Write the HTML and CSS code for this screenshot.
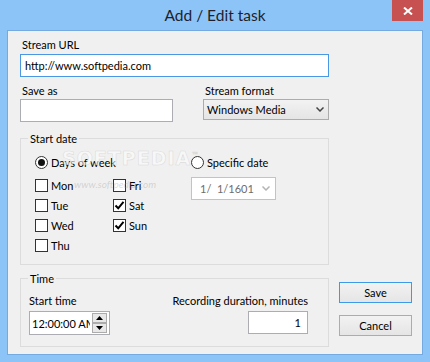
FILE: index.html
```html
<!DOCTYPE html>
<html lang="en">
<head>
    <meta charset="UTF-8">
    <title>Add / Edit task</title>
    <link rel="stylesheet" href="styles.css">
</head>
<body>

    <div class="window">
        <div class="titlebar">
            <div class="title">Add / Edit task</div>
            <button class="close" aria-label="Close">
                <svg width="10" height="8" viewBox="0 0 10 8"><path d="M1 0.5 L9 7.5 M9 0.5 L1 7.5" stroke="#fff" stroke-width="2"/></svg>
            </button>
        </div>

        <div class="client">
            <div class="main">
                <label class="label">Stream URL</label>
                <input type="text" class="textbox url" value="http://www.softpedia.com">

                <div class="format-row">
                    <div class="field">
                        <label class="label">Save as</label>
                        <input type="text" class="textbox saveas" value="">
                    </div>
                    <div class="field">
                        <label class="label">Stream format</label>
                        <div class="combo">
                            <span>Windows Media</span>
                            <svg width="8" height="5" viewBox="0 0 8 5"><path d="M0.5 0.5 L4 4 L7.5 0.5" fill="none" stroke="#444" stroke-width="1.5"/></svg>
                        </div>
                    </div>
                </div>

                <fieldset class="group start-date">
                    <legend>Start date</legend>
                    <div class="date-grid">
                        <label class="radio days"><span class="dot checked"></span>Days of week</label>
                        <label class="radio"><span class="dot"></span>Specific date</label>
                        <label class="check"><span class="box"></span>Mon</label>
                        <label class="check"><span class="box"></span>Fri</label>
                        <div class="datepick">
                            <span class="date-text">1/  1/1601</span>
                            <svg width="8" height="5" viewBox="0 0 8 5"><path d="M0.5 0.5 L4 4 L7.5 0.5" fill="none" stroke="#b4b4b4" stroke-width="1.5"/></svg>
                        </div>
                        <label class="check"><span class="box"></span>Tue</label>
                        <label class="check"><span class="box"><svg width="11" height="11" viewBox="0 0 11 11"><path d="M1.5 5.5 L4.2 8.3 L9.5 1.8" fill="none" stroke="#000" stroke-width="2"/></svg></span>Sat</label>
                        <label class="check"><span class="box"></span>Wed</label>
                        <label class="check"><span class="box"><svg width="11" height="11" viewBox="0 0 11 11"><path d="M1.5 5.5 L4.2 8.3 L9.5 1.8" fill="none" stroke="#000" stroke-width="2"/></svg></span>Sun</label>
                        <label class="check"><span class="box"></span>Thu</label>
                    </div>
                </fieldset>

                <fieldset class="group time">
                    <legend>Time</legend>
                    <div class="time-row">
                        <div class="field">
                            <label class="label plain">Start time</label>
                            <div class="spin">
                                <span class="spin-text">12:00:00 AM</span>
                                <div class="spin-buttons">
                                    <span class="spin-btn"><svg width="7" height="4" viewBox="0 0 7 4"><path d="M0 4 L3.5 0 L7 4 Z" fill="#000"/></svg></span>
                                    <span class="spin-btn"><svg width="7" height="4" viewBox="0 0 7 4"><path d="M0 0 L7 0 L3.5 4 Z" fill="#000"/></svg></span>
                                </div>
                            </div>
                        </div>
                        <div class="field right">
                            <label class="label plain">Recording duration, minutes</label>
                            <input type="text" class="textbox minutes" value="1">
                        </div>
                    </div>
                </fieldset>
            </div>

            <div class="side">
                <button class="btn default">Save</button>
                <button class="btn">Cancel</button>
            </div>

            <!-- softpedia watermark -->
            <div class="watermark">
                <span class="wm-big">SOFTPEDIA<sup>™</sup></span>
                <span class="wm-small">www.softpedia.com</span>
            </div>
        </div>
    </div>

</body>
</html>
```

FILE: styles.css
```css
/* Reset */
* {
    margin: 0;
    padding: 0;
    box-sizing: border-box;
}

body {
    width: 430px;
    height: 362px;
    font-family: Lato, sans-serif;
    font-size: 11px;
    color: #000;
    background: #8dc4f7;
    overflow: hidden;
}

/* Window frame */
.window {
    height: 362px;
    display: flex;
    flex-direction: column;
    padding: 0 7px 7px;
    background: #8dc4f7;
}

.titlebar {
    height: 30px;
    display: flex;
    align-items: flex-start;
}

.title {
    flex: 1;
    padding-left: 31px;
    text-align: center;
    font-size: 15.5px;
    line-height: 30px;
    color: #1e1e2c;
}

.close {
    width: 31px;
    height: 21px;
    border: none;
    background: #c75050;
    display: flex;
    align-items: center;
    justify-content: center;
}

/* Client area */
.client {
    flex: 1;
    position: relative;
    display: flex;
    gap: 10px;
    padding: 6px 10px 0 12px;
    background: #f0f0f0;
    border: 1px solid #74aae0;
}

.main {
    width: 309px;
    display: flex;
    flex-direction: column;
}

.side {
    width: 73px;
    display: flex;
    flex-direction: column;
    justify-content: flex-end;
    gap: 12px;
    padding-bottom: 18px;
}

.label {
    display: block;
    line-height: 15px;
    padding-left: 2px;
    white-space: nowrap;
}

.label.plain {
    padding-left: 0;
}

/* Text boxes */
.textbox {
    display: block;
    height: 23px;
    padding: 0 4px;
    font-family: Lato, sans-serif;
    font-size: 11px;
    color: #000;
    background: #fff;
    border: 1px solid #abadb3;
    outline: none;
}

.url {
    width: 309px;
    margin-top: 2px;
    border-color: #4a98e4;
}

.format-row {
    display: grid;
    grid-template-columns: 153px 126px;
    column-gap: 30px;
    margin-top: 6px;
}

.saveas {
    width: 153px;
    margin-top: 1px;
}

.combo {
    height: 21px;
    margin-top: 1px;
    padding: 0 4px 0 3px;
    display: flex;
    align-items: center;
    justify-content: space-between;
    background: linear-gradient(#f2f2f2, #e5e5e5);
    border: 1px solid #acacac;
}

/* Group boxes */
.group {
    border: 1px solid #dcdcdc;
    min-width: 0;
}

.group legend {
    line-height: 15px;
    padding: 0 2px;
    margin-left: -1px;
}

.start-date {
    margin-top: 9px;
    padding: 8px 0 9px 8px;
}

.time {
    margin-top: 6px;
    padding: 7px 20px 11px 8px;
}

.date-grid {
    display: grid;
    grid-template-columns: 78px 78px 1fr;
    grid-template-rows: 21px repeat(4, 20px);
    margin-left: 6px;
}

.radio {
    height: 16px;
    align-self: start;
    display: flex;
    align-items: center;
    gap: 3px;
}

.radio.days {
    grid-column: 1 / span 2;
}

.dot {
    width: 13px;
    height: 13px;
    border: 1px solid #333;
    border-radius: 50%;
    background: #fff;
    display: flex;
    align-items: center;
    justify-content: center;
}

.dot.checked::after {
    content: "";
    width: 7px;
    height: 7px;
    border-radius: 50%;
    background: #111;
}

.check {
    height: 20px;
    display: flex;
    align-items: center;
    gap: 3px;
}

.box {
    width: 13px;
    height: 13px;
    border: 1px solid #333;
    background: #fff;
    display: flex;
    align-items: center;
    justify-content: center;
}

.datepick {
    grid-column: 3;
    grid-row: 2 / span 3;
    align-self: start;
    width: 85px;
    height: 23px;
    margin-top: 2px;
    padding: 0 5px 0 8px;
    display: flex;
    align-items: center;
    justify-content: space-between;
    background: #fff;
    border: 1px solid #c3c3c3;
}

.date-text {
    white-space: pre;
    color: #6d6d6d;
}

/* Time */
.time-row {
    display: flex;
    justify-content: space-between;
}

.field.right {
    display: flex;
    flex-direction: column;
    align-items: flex-end;
}

.spin {
    width: 81px;
    height: 24px;
    margin-top: 3px;
    padding: 0 2px;
    display: flex;
    align-items: center;
    background: #fff;
    border: 1px solid #abadb3;
}

.spin-text {
    flex: 1;
    overflow: hidden;
    white-space: nowrap;
}

.spin-buttons {
    width: 15px;
    margin-left: 2px;
    display: flex;
    flex-direction: column;
}

.spin-btn {
    height: 10px;
    display: flex;
    align-items: center;
    justify-content: center;
    background: #e8e8e8;
    border: 1px solid #acacac;
}

.minutes {
    width: 60px;
    margin-top: 3px;
    text-align: right;
    padding-right: 6px;
}

/* Buttons */
.btn {
    height: 21px;
    font-family: Lato, sans-serif;
    font-size: 11px;
    color: #000;
    background: linear-gradient(#f2f2f2, #e5e5e5);
    border: 1px solid #acacac;
}

.btn.default {
    border-color: #3c9ae8;
}

/* Watermark */
.watermark {
    position: absolute;
    left: 54px;
    top: 116px;
    display: flex;
    flex-direction: column;
    pointer-events: none;
}

.wm-big {
    font-family: "DejaVu Sans", sans-serif;
    font-size: 19px;
    font-weight: bold;
    letter-spacing: 1px;
    color: rgba(255, 255, 255, 0.55);
    -webkit-text-stroke: 0.6px rgba(170, 170, 170, 0.35);
}

.wm-big sup {
    font-size: 8px;
    font-weight: normal;
}

.wm-small {
    margin: 9px 0 0 12px;
    font-size: 10px;
    font-style: italic;
    color: rgba(150, 150, 150, 0.35);
}
```
